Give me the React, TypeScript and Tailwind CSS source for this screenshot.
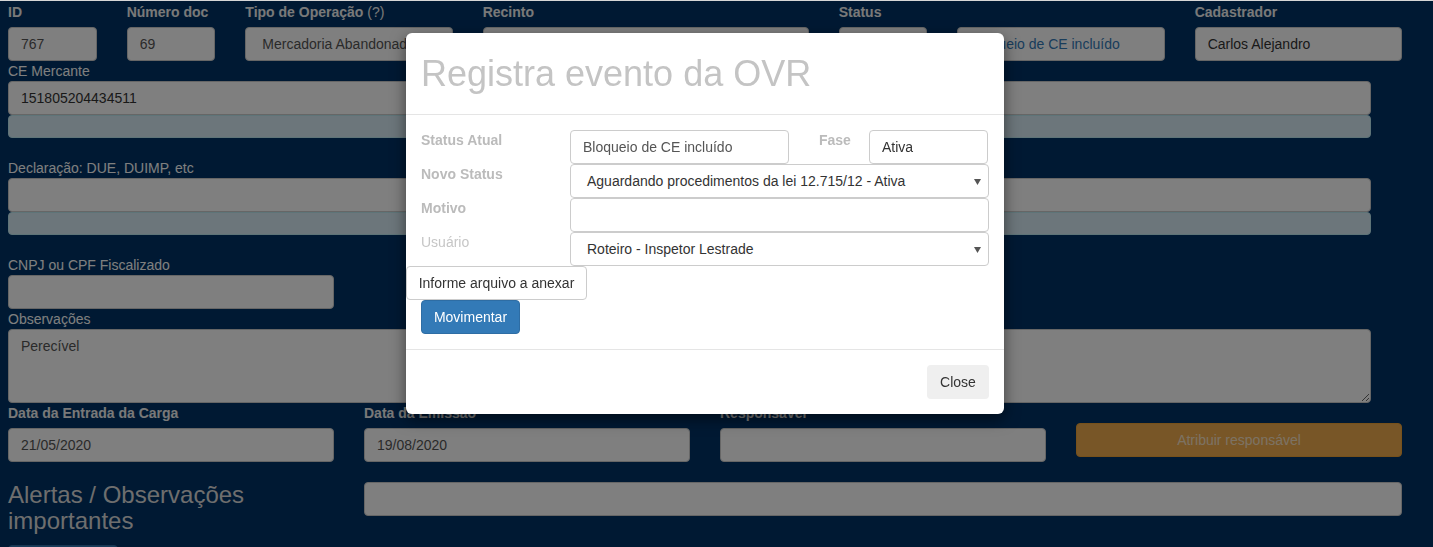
import React from "react";

const font = { fontFamily: '"Liberation Sans", Arial, sans-serif' };

function Label({ children, bold }: { children: React.ReactNode; bold?: boolean }) {
  return (
    <label className={`block h-[20px] text-[14px] leading-[20px] ${bold ? "font-bold text-[#f2f2f2]" : "text-white"}`}>
      {children}
    </label>
  );
}

function Field({ value = "", className = "" }: { value?: string; className?: string }) {
  return (
    <input
      readOnly
      value={value}
      className={`block h-[34px] w-full rounded-[4px] border border-[#ccc] bg-white px-3 text-[14px] text-[#555] outline-none ${className}`}
    />
  );
}

function InfoBar() {
  return <div className="h-[23px] w-[1363px] rounded-[4px] border border-[#bce8f1] bg-[#d9edf7]" />;
}

function SelectBox({ value }: { value: string }) {
  return (
    <div className="relative flex h-[34px] w-[419px] items-center rounded-[4px] border border-[#ccc] bg-white pl-[16px] text-[14px] text-[#333]">
      {value}
      <svg className="absolute right-[7px] top-[14px]" width="7" height="6" viewBox="0 0 7 6">
        <path d="M0 0h7L3.5 6z" fill="#555" />
      </svg>
    </div>
  );
}

function ModalLabel({ children, light }: { children: React.ReactNode; light?: boolean }) {
  return (
    <div className={`w-[149px] shrink-0 text-[14px] leading-[20px] ${light ? "text-[#c6c6c6]" : "font-bold text-[#bbb]"}`}>
      {children}
    </div>
  );
}

export default function App() {
  return (
    <div className="relative min-h-screen overflow-hidden bg-[#003366]" style={font}>
      <div className="absolute left-0 right-0 top-0 z-[60] h-px bg-[#d6d6d6]" />

      <div className="px-2 pt-[2px]">
        <div className="grid w-[1394px] grid-cols-12 gap-x-[30px]">
          <div className="col-span-1">
            <Label bold>ID</Label>
            <div className="mt-[5px]"><Field value="767" /></div>
          </div>
          <div className="col-span-1">
            <Label bold>Número doc</Label>
            <div className="mt-[5px]"><Field value="69" /></div>
          </div>
          <div className="col-span-2">
            <Label bold>
              Tipo de Operação <span className="font-normal">(?)</span>
            </Label>
            <div className="mt-[5px]"><Field value="Mercadoria Abandonada" className="px-[16px]" /></div>
          </div>
          <div className="col-span-3">
            <Label bold>Recinto</Label>
            <div className="mt-[5px]"><Field /></div>
          </div>
          <div className="col-span-1">
            <Label bold>Status</Label>
            <div className="mt-[5px]"><Field /></div>
          </div>
          <div className="col-span-2">
            <Label bold>&nbsp;</Label>
            <div className="mt-[5px]"><Field value="Bloqueio de CE incluído" className="!text-[#337ab7]" /></div>
          </div>
          <div className="col-span-2">
            <Label bold>Cadastrador</Label>
            <div className="mt-[5px]"><Field value="Carlos Alejandro" className="!text-[#333]" /></div>
          </div>
        </div>

        <Label>CE Mercante</Label>
        <div className="w-[1363px]"><Field value="151805204434511" className="!text-[#333]" /></div>
        <InfoBar />

        <div className="mt-[20px]">
          <Label>Declaração: DUE, DUIMP, etc</Label>
          <div className="w-[1363px]"><Field /></div>
          <InfoBar />
        </div>

        <div className="mt-[20px]">
          <Label>CNPJ ou CPF Fiscalizado</Label>
          <div className="w-[326px]"><Field /></div>
        </div>

        <Label>Observações</Label>
        <textarea
          readOnly
          value="Perecível"
          className="block h-[74px] w-[1363px] resize-y rounded-[4px] border border-[#ccc] bg-white px-3 py-[6px] text-[14px] leading-[20px] text-[#555] outline-none"
        />

        <div className="grid w-[1394px] grid-cols-12 gap-x-[30px]">
          <div className="col-span-3">
            <Label bold>Data da Entrada da Carga</Label>
            <div className="mt-[5px]"><Field value="21/05/2020" /></div>
          </div>
          <div className="col-span-3">
            <Label bold>Data da Emissão</Label>
            <div className="mt-[5px]"><Field value="19/08/2020" /></div>
          </div>
          <div className="col-span-3">
            <Label bold>Responsável</Label>
            <div className="mt-[5px]"><Field /></div>
          </div>
          <div className="col-span-3 pt-[20px]">
            <button className="h-[34px] w-full rounded-[4px] border border-[#eea236] bg-[#f0ad4e] text-[14px] text-white/70">
              Atribuir responsável
            </button>
          </div>
        </div>

        <div className="grid w-[1394px] grid-cols-12 gap-x-[30px]">
          <h3 className="col-span-3 mb-[10px] mt-[20px] text-[24px] leading-[1.1] text-[#ddd]">
            Alertas / Observações importantes
          </h3>
          <div className="col-span-9 mt-[20px]"><Field /></div>
        </div>

        <button className="h-[34px] w-[110px] rounded-[4px] border border-[#2e6da4] bg-[#337ab7]" />
      </div>

      <div className="fixed inset-0 z-40 bg-black/50" />

      <div className="absolute left-[406px] top-[33px] z-50 w-[598px] rounded-[6px] bg-white shadow-[0_5px_15px_rgba(0,0,0,0.5)]">
        <div className="border-b border-[#e5e5e5] p-[15px]">
          <h4 className="text-[36px] leading-[51px] text-[#c4c4c4]">Registra evento da OVR</h4>
        </div>

        <div className="p-[15px]">
          <div className="flex h-[34px]">
            <ModalLabel>Status Atual</ModalLabel>
            <div className="w-[219px]"><Field value="Bloqueio de CE incluído" /></div>
            <div className="ml-[30px] w-[50px] text-[14px] font-bold leading-[20px] text-[#bbb]">Fase</div>
            <div className="w-[119px]"><Field value="Ativa" className="!text-[#333]" /></div>
          </div>
          <div className="flex h-[34px]">
            <ModalLabel>Novo Status</ModalLabel>
            <SelectBox value="Aguardando procedimentos da lei 12.715/12 - Ativa" />
          </div>
          <div className="flex h-[34px]">
            <ModalLabel>Motivo</ModalLabel>
            <div className="w-[419px]"><Field /></div>
          </div>
          <div className="flex h-[34px]">
            <ModalLabel light>Usuário</ModalLabel>
            <SelectBox value="Roteiro - Inspetor Lestrade" />
          </div>
          <button className="-ml-[15px] block h-[34px] w-[181px] rounded-[4px] border border-[#ccc] bg-white text-[14px] text-[#333]">
            Informe arquivo a anexar
          </button>
          <button className="block h-[34px] w-[99px] rounded-[4px] border border-[#2e6da4] bg-[#337ab7] text-[14px] text-white">
            Movimentar
          </button>
        </div>

        <div className="flex justify-end border-t border-[#e5e5e5] p-[15px]">
          <button className="h-[34px] w-[62px] rounded-[4px] bg-[#efefef] text-[14px] text-[#333]">Close</button>
        </div>
      </div>
    </div>
  );
}
